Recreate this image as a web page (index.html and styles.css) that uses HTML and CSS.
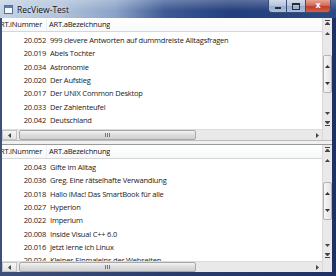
FILE: index.html
```html
<!DOCTYPE html>
<html lang="de">
<head>
    <meta charset="UTF-8">
    <title>RecView-Test</title>
    <link rel="stylesheet" href="styles.css">
</head>
<body>
    <div class="window">
        <div class="titlebar">
            <svg class="app-icon" width="9" height="9" viewBox="0 0 9 9">
                <rect x="0.5" y="0.5" width="8" height="8" fill="#f4f7fb" stroke="#5a6f92"/>
                <rect x="1" y="1" width="7" height="2" fill="#4f7fc4"/>
            </svg>
            <span class="title">RecView-Test</span>
            <div class="caption">
                <span class="cap cap-min"><i></i></span>
                <span class="cap cap-max"><i></i></span>
                <span class="cap cap-close">x</span>
            </div>
        </div>

        <div class="client">
            <!-- obere Tabelle -->
            <div class="view view-top">
                <div class="pane">
                    <div class="header">
                        <div class="hcell hnum"><span>ART.iNummer</span></div>
                        <div class="hcell hname">ART.aBezeichnung</div>
                    </div>
                    <div class="rows">
                        <div class="row"><span class="num">20.052</span><span class="name">999 clevere Antworten auf dummdreiste Alltagsfragen</span></div>
                        <div class="row"><span class="num">20.019</span><span class="name">Abels Tochter</span></div>
                        <div class="row"><span class="num">20.034</span><span class="name">Astronomie</span></div>
                        <div class="row"><span class="num">20.020</span><span class="name">Der Aufstieg</span></div>
                        <div class="row"><span class="num">20.017</span><span class="name">Der UNIX Common Desktop</span></div>
                        <div class="row"><span class="num">20.033</span><span class="name">Der Zahlenteufel</span></div>
                        <div class="row"><span class="num">20.042</span><span class="name">Deutschland</span></div>
                    </div>
                    <div class="hscroll">
                        <span class="hs-btn hs-left"><svg width="3" height="5" viewBox="0 0 3 5"><path d="M3 0L0 2.5 3 5z" fill="#444"/></svg></span>
                        <span class="hs-thumb"><i></i><i></i><i></i></span>
                        <span class="hs-track"></span>
                        <span class="hs-btn hs-right"><svg width="3" height="5" viewBox="0 0 3 5"><path d="M0 0L3 2.5 0 5z" fill="#444"/></svg></span>
                    </div>
                </div>
                <div class="vscroll">
                    <span class="vs-btn vs-first"><svg width="5" height="5" viewBox="0 0 5 5"><path d="M0 0.5h5M0 5L2.5 2 5 5z" stroke="#444" stroke-width="1" fill="#444"/></svg></span>
                    <span class="vs-btn vs-up"><svg width="5" height="3" viewBox="0 0 5 3"><path d="M0 3L2.5 0 5 3z" fill="#444"/></svg></span>
                    <div class="vs-track">
                        <div class="vs-thumb">
                            <svg width="5" height="3" viewBox="0 0 5 3"><path d="M0 3L2.5 0 5 3z" fill="#333"/></svg>
                            <svg width="5" height="3" viewBox="0 0 5 3"><path d="M0 0L2.5 3 5 0z" fill="#333"/></svg>
                        </div>
                    </div>
                    <span class="vs-btn"><svg width="5" height="3" viewBox="0 0 5 3"><path d="M0 0L2.5 3 5 0z" fill="#444"/></svg></span>
                    <span class="vs-btn"><svg width="5" height="5" viewBox="0 0 5 5"><path d="M0 4.5h5M0 0L2.5 3 5 0z" stroke="#444" stroke-width="1" fill="#444"/></svg></span>
                    <span class="vs-corner"></span>
                </div>
            </div>

            <div class="splitter"></div>

            <!-- untere Tabelle -->
            <div class="view view-bottom">
                <div class="pane">
                    <div class="header">
                        <div class="hcell hnum"><span>ART.iNummer</span></div>
                        <div class="hcell hname">ART.aBezeichnung</div>
                    </div>
                    <div class="rows">
                        <div class="row"><span class="num">20.043</span><span class="name">Gifte im Alltag</span></div>
                        <div class="row"><span class="num">20.036</span><span class="name">Greg. Eine rätselhafte Verwandlung</span></div>
                        <div class="row"><span class="num">20.018</span><span class="name">Hallo iMac! Das SmartBook für alle</span></div>
                        <div class="row"><span class="num">20.027</span><span class="name">Hyperion</span></div>
                        <div class="row"><span class="num">20.022</span><span class="name">Imperium</span></div>
                        <div class="row"><span class="num">20.008</span><span class="name">Inside Visual C++ 6.0</span></div>
                        <div class="row"><span class="num">20.016</span><span class="name">Jetzt lerne ich Linux</span></div>
                        <div class="row"><span class="num">20.024</span><span class="name">Kleines Einmaleins der Webseiten</span></div>
                    </div>
                    <div class="hscroll">
                        <span class="hs-btn hs-left"><svg width="3" height="5" viewBox="0 0 3 5"><path d="M3 0L0 2.5 3 5z" fill="#444"/></svg></span>
                        <span class="hs-thumb"><i></i><i></i><i></i></span>
                        <span class="hs-track"></span>
                        <span class="hs-btn hs-right"><svg width="3" height="5" viewBox="0 0 3 5"><path d="M0 0L3 2.5 0 5z" fill="#444"/></svg></span>
                    </div>
                </div>
                <div class="vscroll">
                    <span class="vs-btn vs-first"><svg width="5" height="5" viewBox="0 0 5 5"><path d="M0 0.5h5M0 5L2.5 2 5 5z" stroke="#444" stroke-width="1" fill="#444"/></svg></span>
                    <span class="vs-btn vs-up"><svg width="5" height="3" viewBox="0 0 5 3"><path d="M0 3L2.5 0 5 3z" fill="#444"/></svg></span>
                    <div class="vs-track">
                        <div class="vs-thumb">
                            <svg width="5" height="3" viewBox="0 0 5 3"><path d="M0 3L2.5 0 5 3z" fill="#333"/></svg>
                            <svg width="5" height="3" viewBox="0 0 5 3"><path d="M0 0L2.5 3 5 0z" fill="#333"/></svg>
                        </div>
                    </div>
                    <span class="vs-btn"><svg width="5" height="3" viewBox="0 0 5 3"><path d="M0 0L2.5 3 5 0z" fill="#444"/></svg></span>
                    <span class="vs-btn"><svg width="5" height="5" viewBox="0 0 5 5"><path d="M0 4.5h5M0 0L2.5 3 5 0z" stroke="#444" stroke-width="1" fill="#444"/></svg></span>
                    <span class="vs-corner"></span>
                </div>
            </div>
        </div>
    </div>
</body>
</html>
```

FILE: styles.css
```css
body {
    margin: 0;
    font-family: "Open Sans", "Noto Sans", sans-serif;
    overflow: hidden;
}
.window {
    width: 336px;
    height: 276px;
    display: flex;
    flex-direction: column;
    background: linear-gradient(90deg, #3d4f78 0, #2a3c6c 50%, #1f3064 100%);
}
.titlebar {
    height: 18px;
    flex: none;
    display: flex;
    align-items: center;
    position: relative;
    background:
        linear-gradient(180deg, rgba(255,255,255,0.25) 0, rgba(255,255,255,0) 60%),
        linear-gradient(90deg, #c3d1e3 0, #b0c2da 60px, #8aa3c8 115px, #3d5a95 165px, #233f7c 230px, #2a4886 336px);
}
.app-icon {
    margin-left: 4px;
    margin-top: 1px;
}
.title {
    margin-left: 4px;
    font-size: 8.5px;
    color: #111;
    text-shadow: 0 0 4px rgba(255,255,255,0.9);
}
.caption {
    position: absolute;
    top: 0;
    left: 268px;
    display: flex;
}
.cap {
    height: 13px;
    display: flex;
    align-items: center;
    justify-content: center;
    border: 1px solid #3a4d72;
    border-top: none;
    box-sizing: border-box;
    background: linear-gradient(180deg, #d2dcea 0, #b4c4dc 50%, #98aed0 51%, #a9bfdf 100%);
}
.cap-min {
    width: 18px;
    border-radius: 0 0 0 4px;
    border-right: none;
}
.cap-min i {
    width: 6px;
    height: 2px;
    margin-top: 4px;
    background: #2b2b2b;
}
.cap-max {
    width: 19px;
    border-right: none;
}
.cap-max i {
    width: 6px;
    height: 4px;
    border: 1px solid #2b2b2b;
    border-top-width: 2px;
}
.cap-close {
    width: 26px;
    border-radius: 0 0 4px 0;
    color: #fff;
    font-family: "DejaVu Sans", sans-serif;
    font-weight: bold;
    font-size: 8px;
    line-height: 1;
    background: linear-gradient(180deg, #e6a292 0, #d36c57 45%, #c23d27 55%, #d3614a 100%);
}
.client {
    flex: 1;
    margin: 0 4px 4px 2px;
    display: flex;
    flex-direction: column;
    background: #fff;
}
.view {
    display: flex;
    background: #fff;
}
.view-top {
    height: 122px;
}
.view-bottom {
    height: 127px;
}
.pane {
    flex: 1;
    display: flex;
    flex-direction: column;
    min-width: 0;
}
.header {
    height: 13px;
    flex: none;
    display: flex;
    border-bottom: 1px solid #d6d6d6;
    background: linear-gradient(180deg, #fff 0, #f7f8fa 100%);
    font-size: 7.5px;
    letter-spacing: -0.2px;
    color: #111;
    line-height: 13px;
}
.hcell {
    white-space: nowrap;
    overflow: hidden;
}
.hnum {
    width: 45px;
    flex: none;
    display: flex;
    justify-content: flex-end;
    padding-right: 4px;
    box-sizing: border-box;
    border-right: 1px solid #eceef1;
}
.hname {
    padding-left: 2px;
}
.rows {
    flex: 1;
    overflow: hidden;
    padding-top: 2px;
    font-size: 7.5px;
    letter-spacing: -0.2px;
    color: #1a1a1a;
}
.row {
    height: 13.33px;
    line-height: 13.33px;
    display: flex;
    white-space: nowrap;
}
.num {
    width: 44px;
    flex: none;
    text-align: right;
}
.name {
    padding-left: 4px;
}
.hscroll {
    height: 10px;
    flex: none;
    display: flex;
    align-items: stretch;
    background: #e9e9e9;
    border-top: 1px solid #dcdcdc;
}
.hs-btn {
    display: flex;
    align-items: center;
    justify-content: center;
}
.hs-left {
    width: 13px;
    border: 1px solid #c4c4c4;
    background: linear-gradient(180deg, #f6f6f6, #e2e2e2);
}
.hs-right {
    width: 10px;
}
.hs-thumb {
    width: 177px;
    margin-left: 2px;
    display: flex;
    align-items: center;
    justify-content: center;
    gap: 1px;
    border: 1px solid #a8a8a8;
    border-radius: 2px;
    box-sizing: border-box;
    background: linear-gradient(180deg, #f3f3f3 0, #dcdcdc 50%, #cfcfcf 100%);
}
.hs-thumb i {
    width: 1px;
    height: 4px;
    background: #777;
}
.hs-track {
    flex: 1;
}
.vscroll {
    width: 10px;
    flex: none;
    display: flex;
    flex-direction: column;
    background: #e9e9e9;
    border-left: 1px solid #dadada;
    box-sizing: border-box;
}
.vs-btn {
    height: 10px;
    flex: none;
    display: flex;
    align-items: center;
    justify-content: center;
}
.vs-first {
    height: 8px;
}
.vs-up {
    margin-top: 2px;
}
.vs-track {
    flex: 1;
}
.vs-thumb {
    height: 38px;
    margin-top: 17px;
    display: flex;
    flex-direction: column;
    align-items: center;
    justify-content: space-between;
    padding: 9px 0 7px;
    box-sizing: border-box;
    border: 1px solid #b4b4b4;
    border-radius: 2px;
    background: linear-gradient(90deg, #f7f7f7 0, #e4e4e4 100%);
}
.vs-corner {
    height: 12px;
    flex: none;
}
.splitter {
    height: 5px;
    flex: none;
    background: #f0f0f0;
    border-top: 1px solid #bdbdbd;
    border-bottom: 1px solid #9a9a9a;
    box-sizing: border-box;
}
```
